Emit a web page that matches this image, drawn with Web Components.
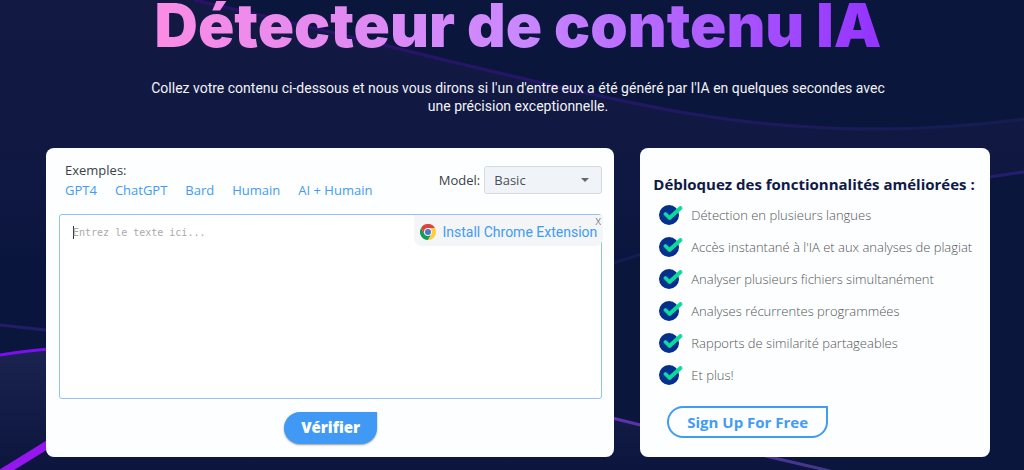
<!DOCTYPE html>
<html lang="fr">
<head>
<meta charset="utf-8">
<meta name="viewport" content="width=device-width, initial-scale=1">
<title>Détecteur de contenu IA</title>
<style>
  body {
    margin: 0;
    background: #0a163c;
    font-family: "Open Sans", "Noto Sans", sans-serif;
  }
</style>
</head>
<body>
<detector-page>
  <page-hero slot="hero">
    <span slot="title">Détecteur de contenu IA</span>
    Collez votre contenu ci-dessous et nous vous dirons si l'un d'entre eux a été généré par l'IA en quelques secondes avec une précision exceptionnelle.
  </page-hero>
  <content-checker slot="main">
    <example-link slot="examples">GPT4</example-link>
    <example-link slot="examples">ChatGPT</example-link>
    <example-link slot="examples">Bard</example-link>
    <example-link slot="examples">Humain</example-link>
    <example-link slot="examples">AI + Humain</example-link>
    <extension-banner slot="banner">Install Chrome Extension</extension-banner>
  </content-checker>
  <feature-panel slot="side">
    <span slot="title">Débloquez des fonctionnalités améliorées :</span>
    <feature-item>Détection en plusieurs langues</feature-item>
    <feature-item>Accès instantané à l'IA et aux analyses de plagiat</feature-item>
    <feature-item>Analyser plusieurs fichiers simultanément</feature-item>
    <feature-item>Analyses récurrentes programmées</feature-item>
    <feature-item>Rapports de similarité partageables</feature-item>
    <feature-item>Et plus!</feature-item>
    <span slot="action">Sign Up For Free</span>
  </feature-panel>
</detector-page>

<script>
// Page shell: decorative waves behind, hero and two columns on top
class DetectorPage extends HTMLElement {
  constructor() {
    super();
    this.attachShadow({ mode: 'open' });
  }

  connectedCallback() {
    this.shadowRoot.innerHTML = `
      <style>
        :host {
          display: grid;
          min-height: 100vh;
        }
        .waves, main {
          grid-area: 1 / 1;
          min-width: 0;
        }
        .waves {
          width: 100%;
          height: 0;
          min-height: 100%;
        }
        main {
          z-index: 1;
          padding: 0 34px 12px 46px;
        }
        .columns {
          display: grid;
          grid-template-columns: 13fr 8fr;
          gap: 26px;
        }
        @media (max-width: 760px) {
          main {
            padding: 0 16px 16px;
          }
          .columns {
            grid-template-columns: 1fr;
          }
        }
      </style>
      <svg class="waves" viewBox="0 0 1024 470" preserveAspectRatio="none" fill="none" aria-hidden="true">
        <defs>
          <linearGradient id="shade" x1="0" y1="0" x2="0" y2="1">
            <stop offset="0" stop-color="#121a44"/>
            <stop offset="0.4" stop-color="#111943"/>
            <stop offset="0.8" stop-color="#0a153e"/>
          </linearGradient>
          <linearGradient id="floor" x1="0" y1="0" x2="0" y2="1">
            <stop offset="0" stop-color="#1b2450"/>
            <stop offset="1" stop-color="#0c153d"/>
          </linearGradient>
          <linearGradient id="ribbon" x1="190" y1="0" x2="1024" y2="0" gradientUnits="userSpaceOnUse">
            <stop offset="0" stop-color="#2b1069"/>
            <stop offset="0.45" stop-color="#25166a"/>
            <stop offset="1" stop-color="#131e50"/>
          </linearGradient>
          <linearGradient id="thread" x1="0" y1="0" x2="1024" y2="0" gradientUnits="userSpaceOnUse">
            <stop offset="0" stop-color="#231c6a"/>
            <stop offset="0.6" stop-color="#121d4e"/>
            <stop offset="1" stop-color="#261c70"/>
          </linearGradient>
          <linearGradient id="tail" x1="614" y1="0" x2="830" y2="0" gradientUnits="userSpaceOnUse">
            <stop offset="0" stop-color="#6030b0"/>
            <stop offset="1" stop-color="#43368a"/>
          </linearGradient>
        </defs>
        <path fill="url(#shade)" d="M0 0H194C320 28 400 50 512 76C640 106 740 129 875 129C930 129 980 125 1024 119V172C900 190 760 215 610 264C400 340 200 350 0 325Z"/>
        <path fill="url(#floor)" d="M0 355C90 340 200 345 330 365C440 382 540 400 614 418C700 440 780 460 830 470H0Z"/>
        <path stroke="url(#ribbon)" stroke-width="3" d="M194 0C320 28 400 50 512 76C640 106 740 129 875 129C930 129 980 125 1024 119"/>
        <path stroke="url(#thread)" stroke-width="3" d="M0 325C200 350 400 340 610 264C740 222 880 192 1024 172"/>
        <path stroke="#7d0df2" stroke-width="3" d="M0 355C90 340 200 345 330 365"/>
        <path stroke="url(#tail)" stroke-width="3" d="M600 415C640 425 700 440 770 457L830 471"/>
        <path stroke="#9516ee" stroke-width="8" d="M0 474L60 437"/>
      </svg>
      <main>
        <slot name="hero"></slot>
        <div class="columns">
          <slot name="main"></slot>
          <slot name="side"></slot>
        </div>
      </main>
    `;
  }
}
customElements.define('detector-page', DetectorPage);

// Gradient headline and introduction
class PageHero extends HTMLElement {
  constructor() {
    super();
    this.attachShadow({ mode: 'open' });
  }

  connectedCallback() {
    this.shadowRoot.innerHTML = `
      <style>
        :host {
          display: flex;
          flex-direction: column;
          align-items: center;
          gap: 29px;
          padding-bottom: 33px;
          text-align: center;
        }
        h1 {
          margin: 0;
          font-family: Inter, sans-serif;
          font-size: 60px;
          font-weight: 900;
          line-height: 50px;
          color: transparent;
          background: linear-gradient(90deg, #fb8ce4, #ca88ff 50%, #9333ff);
          background-clip: text;
          -webkit-background-clip: text;
        }
        p {
          margin: 0;
          max-width: 740px;
          font-family: Roboto, sans-serif;
          font-size: 14px;
          line-height: 18px;
          color: #f1f3f8;
        }
      </style>
      <h1><slot name="title"></slot></h1>
      <p><slot></slot></p>
    `;
  }
}
customElements.define('page-hero', PageHero);

class ExampleLink extends HTMLElement {
  constructor() {
    super();
    this.attachShadow({ mode: 'open' });
  }

  connectedCallback() {
    this.shadowRoot.innerHTML = `
      <style>
        :host {
          display: block;
        }
        a {
          color: #429bf5;
          font-size: 13px;
          line-height: 20px;
          text-decoration: none;
        }
        a:hover {
          text-decoration: underline;
        }
      </style>
      <a href="#"><slot></slot></a>
    `;
  }
}
customElements.define('example-link', ExampleLink);

// Small dismissible promo in the corner of the editor
class ExtensionBanner extends HTMLElement {
  constructor() {
    super();
    this.attachShadow({ mode: 'open' });
  }

  connectedCallback() {
    this.shadowRoot.innerHTML = `
      <style>
        :host {
          display: block;
          background: #f3f5f7;
          border-radius: 0 0 8px 8px;
        }
        a {
          display: flex;
          align-items: center;
          gap: 6px;
          padding: 7px 6px 4px;
          color: #429bf5;
          font-family: Roboto, sans-serif;
          font-size: 14px;
          line-height: 20px;
          text-decoration: none;
          white-space: nowrap;
        }
        svg {
          width: 16px;
          height: 16px;
        }
        button {
          position: absolute;
          top: 0;
          right: 0;
          padding: 0 2px;
          border: 0;
          background: none;
          color: #555;
          font-family: inherit;
          font-size: 12px;
          line-height: 12px;
          font-weight: 300;
          cursor: pointer;
        }
      </style>
      <a href="#">
        <svg viewBox="0 0 48 48" aria-hidden="true">
          <path fill="#0f9d58" d="M24 24L34.4 30L24 48A24 24 0 0 1 3.2 12L13.6 30Z"/>
          <path fill="#ffcd40" d="M24 12H44.8A24 24 0 0 1 24 48L34.4 30Z"/>
          <path fill="#db4437" d="M24 24L13.6 30L3.2 12A24 24 0 0 1 44.8 12H24Z"/>
          <circle cx="24" cy="24" r="12" fill="#f1f1f1"/>
          <circle cx="24" cy="24" r="9" fill="#4c74d0"/>
        </svg>
        <slot></slot>
      </a>
      <button type="button">x</button>
    `;
    this.shadowRoot.querySelector('button').addEventListener('click', () => this.remove());
  }
}
customElements.define('extension-banner', ExtensionBanner);

// Card with the text box to analyse
class ContentChecker extends HTMLElement {
  constructor() {
    super();
    this.attachShadow({ mode: 'open' });
  }

  connectedCallback() {
    this.shadowRoot.innerHTML = `
      <style>
        :host {
          display: flex;
          flex-direction: column;
          box-sizing: border-box;
          min-width: 0;
          padding: 12px 12px 12px 13px;
          background: #fcfeff;
          border-radius: 8px;
          color: #3d4145;
          font-size: 13px;
        }
        header {
          display: flex;
          justify-content: space-between;
          align-items: center;
          padding-left: 6px;
          margin-bottom: 14px;
        }
        .label {
          line-height: 20px;
        }
        .links {
          display: flex;
          flex-wrap: wrap;
          gap: 0 18px;
        }
        .model {
          display: flex;
          align-items: center;
          gap: 4px;
        }
        .picker {
          display: grid;
          align-items: center;
        }
        .picker > * {
          grid-area: 1 / 1;
        }
        select {
          appearance: none;
          width: 118px;
          height: 28px;
          padding: 0 24px 0 9px;
          border: 1px solid #d5dae2;
          border-radius: 3px;
          background: #f0f4f8;
          color: #495057;
          font: inherit;
        }
        .arrow {
          justify-self: end;
          width: 8px;
          height: 4px;
          margin-right: 13px;
          pointer-events: none;
        }
        .editor {
          position: relative;
          display: flex;
        }
        textarea {
          flex: 1;
          box-sizing: border-box;
          min-width: 0;
          height: 185px;
          padding: 10px 13px;
          border: 1px solid #90c2f9;
          border-radius: 3px;
          outline: 0;
          resize: none;
          background: linear-gradient(#333, #333) 13px 11px / 1px 13px no-repeat #fff;
          font-family: "DejaVu Sans Mono", monospace;
          font-size: 10px;
          line-height: 16px;
        }
        textarea::placeholder {
          color: #aaa;
        }
        textarea:focus {
          background: #fff;
        }
        ::slotted(extension-banner) {
          position: absolute;
          top: 1px;
          right: -1px;
        }
        .verify {
          align-self: center;
          margin-top: 13px;
          padding: 0 17px 2px;
          border: 0;
          border-radius: 16px 0 16px 16px;
          background: #409af5;
          box-shadow: 0 1px 2px rgba(0, 0, 0, 0.4);
          color: #fff;
          font-family: inherit;
          font-size: 15px;
          font-weight: 800;
          line-height: 30px;
          cursor: pointer;
        }
      </style>
      <header>
        <div>
          <div class="label">Exemples:</div>
          <div class="links"><slot name="examples"></slot></div>
        </div>
        <div class="model">
          <label for="model">Model:</label>
          <div class="picker">
            <select id="model"><option>Basic</option></select>
            <svg class="arrow" viewBox="0 0 8 4" aria-hidden="true"><path fill="#666" d="M0 0H8L4 4Z"/></svg>
          </div>
        </div>
      </header>
      <div class="editor">
        <textarea aria-label="Entrez le texte ici..." placeholder="Entrez le texte ici..."></textarea>
        <slot name="banner"></slot>
      </div>
      <button class="verify" type="button">Vérifier</button>
    `;
  }
}
customElements.define('content-checker', ContentChecker);

class FeatureItem extends HTMLElement {
  constructor() {
    super();
    this.attachShadow({ mode: 'open' });
  }

  connectedCallback() {
    this.setAttribute('role', 'listitem');
    this.shadowRoot.innerHTML = `
      <style>
        :host {
          display: flex;
          align-items: center;
          gap: 8px;
          color: #555;
          font-size: 13px;
          font-weight: 300;
          line-height: 20px;
        }
        svg {
          flex: none;
          width: 24px;
          height: 20px;
        }
      </style>
      <svg viewBox="0 0 24 20" fill="none" aria-hidden="true">
        <circle cx="10" cy="10" r="10" fill="#052f8c"/>
        <path stroke="#0bdc9b" stroke-width="3.8" stroke-linecap="round" stroke-linejoin="round" d="M6.5 9L10.5 13L21.5 3"/>
      </svg>
      <span><slot></slot></span>
    `;
  }
}
customElements.define('feature-item', FeatureItem);

// Card listing the paid features
class FeaturePanel extends HTMLElement {
  constructor() {
    super();
    this.attachShadow({ mode: 'open' });
  }

  connectedCallback() {
    this.shadowRoot.innerHTML = `
      <style>
        :host {
          display: block;
          box-sizing: border-box;
          min-width: 0;
          padding: 24px 10px 19px 13px;
          background: #fcfeff;
          border-radius: 8px;
        }
        h2 {
          margin: 0;
          color: #101a45;
          font-size: 15px;
          font-weight: 700;
          line-height: 24px;
        }
        .list {
          display: flex;
          flex-direction: column;
          gap: 12px;
          padding: 9px 0 0 6px;
        }
        button {
          margin: 21px 0 0 14px;
          padding: 0 18px;
          border: 2px solid #429bf5;
          border-radius: 16px 0 16px 16px;
          background: none;
          color: #429bf5;
          font-family: inherit;
          font-size: 15px;
          font-weight: 700;
          line-height: 28px;
          cursor: pointer;
        }
      </style>
      <h2><slot name="title"></slot></h2>
      <div class="list" role="list"><slot></slot></div>
      <button type="button"><slot name="action"></slot></button>
    `;
  }
}
customElements.define('feature-panel', FeaturePanel);
</script>
</body>
</html>
